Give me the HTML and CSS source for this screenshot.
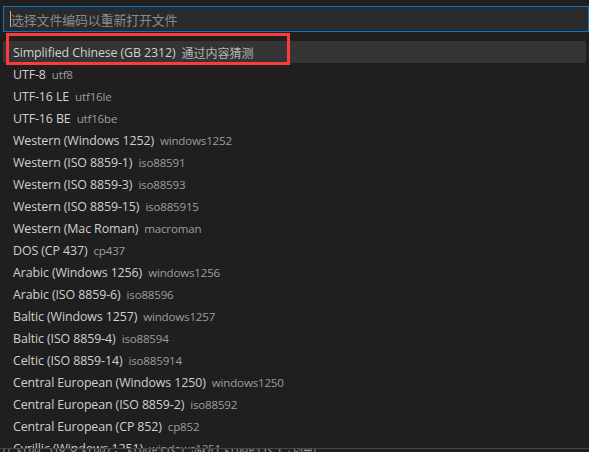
FILE: index.html
```html
<!DOCTYPE html>
<html lang="zh-CN">
<head>
<meta charset="utf-8">
<link rel="stylesheet" href="styles.css">
</head>
<body>
<div class="widget">
  <div class="input"><span class="caret"></span><span class="placeholder">选择文件编码以重新打开文件</span></div>
  <div class="list">
    <div class="row selected"><span class="label">Simplified Chinese (GB 2312)</span><span class="desc cjk">通过内容猜测</span></div>
    <div class="row"><span class="label">UTF-8</span><span class="desc">utf8</span></div>
    <div class="row"><span class="label">UTF-16 LE</span><span class="desc">utf16le</span></div>
    <div class="row"><span class="label">UTF-16 BE</span><span class="desc">utf16be</span></div>
    <div class="row"><span class="label">Western (Windows 1252)</span><span class="desc">windows1252</span></div>
    <div class="row"><span class="label">Western (ISO 8859-1)</span><span class="desc">iso88591</span></div>
    <div class="row"><span class="label">Western (ISO 8859-3)</span><span class="desc">iso88593</span></div>
    <div class="row"><span class="label">Western (ISO 8859-15)</span><span class="desc">iso885915</span></div>
    <div class="row"><span class="label">Western (Mac Roman)</span><span class="desc">macroman</span></div>
    <div class="row"><span class="label">DOS (CP 437)</span><span class="desc">cp437</span></div>
    <div class="row"><span class="label">Arabic (Windows 1256)</span><span class="desc">windows1256</span></div>
    <div class="row"><span class="label">Arabic (ISO 8859-6)</span><span class="desc">iso88596</span></div>
    <div class="row"><span class="label">Baltic (Windows 1257)</span><span class="desc">windows1257</span></div>
    <div class="row"><span class="label">Baltic (ISO 8859-4)</span><span class="desc">iso88594</span></div>
    <div class="row"><span class="label">Celtic (ISO 8859-14)</span><span class="desc">iso885914</span></div>
    <div class="row"><span class="label">Central European (Windows 1250)</span><span class="desc">windows1250</span></div>
    <div class="row"><span class="label">Central European (ISO 8859-2)</span><span class="desc">iso88592</span></div>
    <div class="row"><span class="label">Central European (CP 852)</span><span class="desc">cp852</span></div>
    <div class="row"><span class="label">Cyrillic (Windows 1251)</span><span class="desc">windows1251</span></div>
  </div>
  <div class="highlight-box"></div>
</div>
<div class="editor-strip"><span>// 订阅（接受订阅）：订阅时长 已激活 订阅时长 已到期</span></div>
</body>
</html>
```
FILE: styles.css
```css
html, body {
  margin: 0;
  padding: 0;
  background: #1f1f1f;
  width: 589px;
  height: 452px;
  overflow: hidden;
  font-family: "Open Sans", "Noto Sans CJK SC", sans-serif;
}
.widget {
  position: relative;
  height: 448px;
  padding: 6px 0 0 3px;
  box-sizing: border-box;
  overflow: hidden;
}
.input {
  height: 26px;
  box-sizing: border-box;
  border: 1px solid #0078d4;
  background: #2a2a2a;
  display: flex;
  align-items: center;
  padding-left: 6px;
}
.caret {
  width: 1px;
  height: 16px;
  background: #b8b8b8;
}
.placeholder {
  font-family: "Noto Sans CJK SC", sans-serif;
  font-size: 13px;
  color: #8a8a8a;
  letter-spacing: -0.2px;
}
.list {
  margin-top: 9px;
  margin-right: 3px;
}
.row {
  height: 22px;
  display: flex;
  align-items: center;
  padding-left: 10px;
  white-space: nowrap;
}
.row.selected {
  background: #343434;
}
.label {
  font-size: 12.4px;
  color: #d0d0d0;
  letter-spacing: -0.1px;
}
.desc {
  font-size: 11.6px;
  color: #9d9d9d;
  margin-left: 6px;
  letter-spacing: -0.2px;
}
.desc.cjk {
  font-family: "Noto Sans CJK SC", sans-serif;
  font-size: 12px;
  color: #b4b4b4;
  letter-spacing: 0;
}
.highlight-box {
  position: absolute;
  left: 6px;
  top: 33px;
  width: 284px;
  height: 32px;
  box-sizing: border-box;
  border: 3px solid #ff3a3a;
}
.editor-strip {
  height: 4px;
  border-top: 1px solid #474747;
  overflow: hidden;
  padding-left: 2px;
}
.editor-strip span {
  display: block;
  font-family: "Noto Sans CJK SC", sans-serif;
  font-size: 13px;
  line-height: 13px;
  color: #9a9a9a;
  margin-top: -9px;
  white-space: nowrap;
}
```
